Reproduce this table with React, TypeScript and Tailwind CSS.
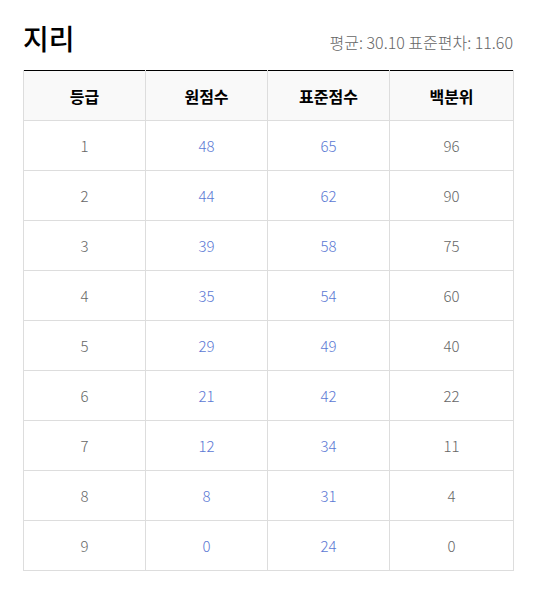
import React from "react";

const rows = [
  [1, 48, 65, 96],
  [2, 44, 62, 90],
  [3, 39, 58, 75],
  [4, 35, 54, 60],
  [5, 29, 49, 40],
  [6, 21, 42, 22],
  [7, 12, 34, 11],
  [8, 8, 31, 4],
  [9, 0, 24, 0],
];

const font = { fontFamily: '"Noto Sans CJK KR", "Noto Sans", sans-serif' };

export default function App() {
  return (
    <div className="w-[540px] h-[609px] bg-white pl-[23px] pr-[27px] pt-[20px]" style={font}>
      <div className="flex items-end justify-between h-[36px]">
        <h1 className="text-[28px] leading-[36px] font-medium text-black">지리</h1>
        <div className="text-[16px] leading-[24px] font-light text-[#666] mb-[2px]">
          평균: 30.10 표준편차: 11.60
        </div>
      </div>
      <table className="mt-[14px] w-[490px] table-fixed border-collapse border-t border-t-black">
        <colgroup>
          <col className="w-[122px]" />
          <col className="w-[122px]" />
          <col className="w-[122px]" />
          <col className="w-[124px]" />
        </colgroup>
        <thead>
          <tr className="h-[50px] bg-[#f9f9f9]">
            {["등급", "원점수", "표준점수", "백분위"].map((h) => (
              <th
                key={h}
                className="border-x border-b border-[#ddd] text-[16px] font-bold text-black p-0"
              >
                {h}
              </th>
            ))}
          </tr>
        </thead>
        <tbody>
          {rows.map((r) => (
            <tr key={r[0]} className="h-[50px]">
              <td className="border border-[#ddd] text-center text-[15px] font-light text-[#666] p-0 pt-[1px]">{r[0]}</td>
              <td className="border border-[#ddd] text-center text-[15px] font-light text-[#5b78d4] p-0 pt-[1px]">{r[1]}</td>
              <td className="border border-[#ddd] text-center text-[15px] font-light text-[#5b78d4] p-0 pt-[1px]">{r[2]}</td>
              <td className="border border-[#ddd] text-center text-[15px] font-light text-[#666] p-0 pt-[1px]">{r[3]}</td>
            </tr>
          ))}
        </tbody>
      </table>
    </div>
  );
}
